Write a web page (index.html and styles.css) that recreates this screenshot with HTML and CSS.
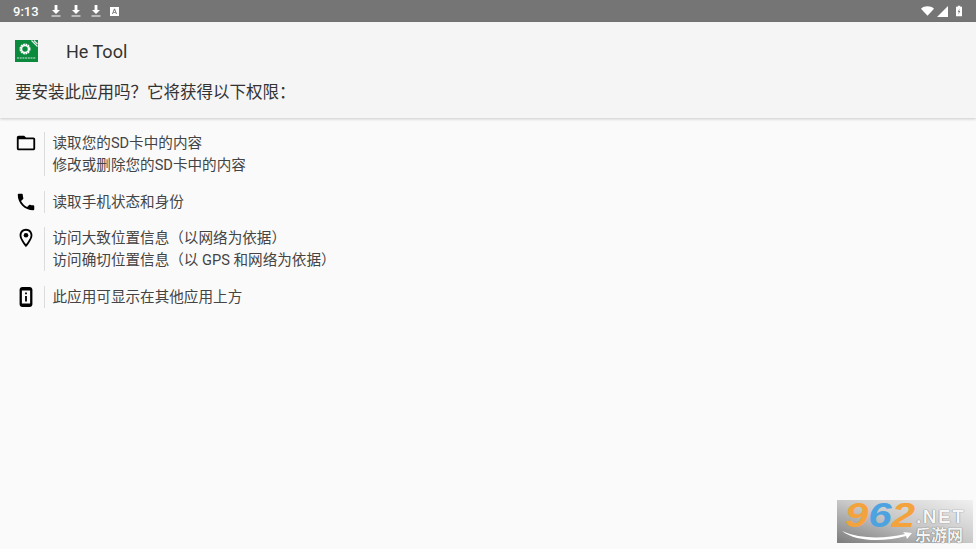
FILE: index.html
```html
<!DOCTYPE html>
<html>
    <head>
        <meta charset="utf-8">
        <link rel="stylesheet" href="styles.css">
    </head>
    <body>
        <div class="status-bar">
            <span class="clock">9:13</span>
            <div class="notify-icons">
                <svg class="dl-icon" viewBox="0 0 10 12"><path d="M3.6 0h2.8v5H9L5 9 1 5h2.6zM0.5 10.4h9v1.200h-9z" fill="#fff"/></svg>
                <svg class="dl-icon" viewBox="0 0 10 12"><path d="M3.6 0h2.8v5H9L5 9 1 5h2.6zM0.5 10.4h9v1.200h-9z" fill="#fff"/></svg>
                <svg class="dl-icon" viewBox="0 0 10 12"><path d="M3.6 0h2.8v5H9L5 9 1 5h2.6zM0.5 10.4h9v1.200h-9z" fill="#fff"/></svg>
                <svg class="a-icon" viewBox="0 0 9 9"><path fill-rule="evenodd" d="M0 0h9v9H0zM4 1.800L2 7h1l.4-1.200h2.200L6 7h1L5 1.800zM3.700 5L4.500 2.900 5.300 5z" fill="#fff"/></svg>
            </div>
            <div class="system-icons">
                <svg class="wifi" viewBox="0 0 14 10"><path d="M0 2.600C3.800-.9 10.200-.9 14 2.600L7 10z" fill="#fff"/></svg>
                <svg class="signal" viewBox="0 0 11 11"><path d="M11 0v11H0z" fill="#fff"/></svg>
                <svg class="battery" viewBox="0 0 7 12"><path fill-rule="evenodd" d="M2 0h3v1h2v11H0V1h2zM4.200 3L2 7h1.300L2.800 10 5 6H3.700z" fill="#fff"/></svg>
            </div>
        </div>

        <div class="header">
            <div class="app-row">
                <svg class="app-logo" viewBox="0 0 23 22">
                    <path d="M0 0h23v22H0z" fill="#0b8a3e"/>
                    <path d="M15 0l8 8V0z" fill="#0b8a3e"/>
                    <path d="M16.500 .5l6 6M19 .5l3.500 3.500" stroke="#e4efe8" stroke-width="1.100"/>
                    <circle cx="10" cy="9" r="4.500" fill="none" stroke="#fff" stroke-width="2" stroke-dasharray="1.700 .65"/>
                    <circle cx="10" cy="9" r="3.400" fill="none" stroke="#fff" stroke-width="1.300"/>
                    <path d="M2 18h19" stroke="#cfe8d8" stroke-width="1" stroke-dasharray="2 .7"/>
                </svg>
                <span class="app-name">He Tool</span>
            </div>
            <div class="question">要安装此应用吗？它将获得以下权限：</div>
        </div>

        <div class="perms">
            <div class="perm">
                <div class="perm-icon">
                    <svg viewBox="0 0 24 24"><path d="M10 4H4c-1.100 0-2 .9-2 2v12c0 1.100.9 2 2 2h16c1.100 0 2-.9 2-2V8c0-1.100-.9-2-2-2h-8zm10 14H4V8h16z"/></svg>
                </div>
                <div class="perm-text">
                    <div>读取您的SD卡中的内容</div>
                    <div>修改或删除您的SD卡中的内容</div>
                </div>
            </div>
            <div class="perm">
                <div class="perm-icon">
                    <svg viewBox="0 0 24 24"><path d="M6.600 10.800c1.400 2.800 3.800 5.100 6.600 6.600l2.200-2.200c.3-.3.700-.4 1-.2 1.100.4 2.300.6 3.600.6.600 0 1 .4 1 1V20c0 .6-.4 1-1 1C10.600 21 3 13.400 3 4c0-.6.400-1 1-1h3.500c.6 0 1 .4 1 1 0 1.300.2 2.500.6 3.600.1.300 0 .7-.2 1z"/></svg>
                </div>
                <div class="perm-text">
                    <div>读取手机状态和身份</div>
                </div>
            </div>
            <div class="perm">
                <div class="perm-icon">
                    <svg viewBox="0 0 24 24"><path fill-rule="evenodd" d="M12 2C8.100 2 5 5.100 5 9c0 5.200 7 13 7 13s7-7.800 7-13c0-3.900-3.100-7-7-7zM7 9c0-2.800 2.200-5 5-5s5 2.200 5 5c0 2.900-2.900 7.200-5 9.900C9.900 16.200 7 11.900 7 9z"/><circle cx="12" cy="9" r="2.500"/></svg>
                </div>
                <div class="perm-text">
                    <div>访问大致位置信息（以网络为依据）</div>
                    <div>访问确切位置信息（以 GPS 和网络为依据）</div>
                </div>
            </div>
            <div class="perm">
                <div class="perm-icon">
                    <svg viewBox="0 0 24 24"><path fill-rule="evenodd" d="M8 1h8c1.700 0 3 1.300 3 3v16c0 1.700-1.300 3-3 3H8c-1.700 0-3-1.300-3-3V4c0-1.700 1.300-3 3-3zM7.500 5v14h9V5zM11 7h2v2h-2zM11 11h2v6h-2z"/></svg>
                </div>
                <div class="perm-text">
                    <div>此应用可显示在其他应用上方</div>
                </div>
            </div>
        </div>

        <div class="watermark">
            <span class="wm-num"><span class="wm-orange">9</span><span class="wm-blue">6</span><span class="wm-orange">2</span></span>
            <span class="wm-net">.NET</span>
            <svg class="wm-swoosh" viewBox="0 0 70 12"><path d="M0 1C18 9 42 9 63 4l-2-2 9 1-5 6-1-3C42 12 14 12 0 1z" fill="#fff"/></svg>
            <span class="wm-cn">乐游网</span>
        </div>
    </body>
</html>
```

FILE: styles.css
```css
html,
body {
    height: 100%;
}

body {
    margin: 0;
    background: #fafafa;
    color: #212121;
    font-family: "Roboto", "Noto Sans CJK SC", sans-serif;
    overflow: hidden;
    display: flex;
    flex-direction: column;
    position: relative;
}

.status-bar {
    height: 22px;
    flex: none;
    background: #757575;
    color: #fff;
    display: flex;
    align-items: center;
    padding: 0 14px 0 13px;
}

.clock {
    font-size: 13px;
    font-weight: 500;
    width: 38px;
}

.notify-icons {
    display: flex;
    align-items: center;
    gap: 10px;
}

.dl-icon {
    width: 10px;
    height: 12px;
}

.a-icon {
    width: 9px;
    height: 9px;
    margin-left: -1px;
}

.system-icons {
    margin-left: auto;
    display: flex;
    align-items: center;
    gap: 3px;
}

.wifi {
    width: 13px;
    height: 10px;
}

.signal {
    width: 11px;
    height: 11px;
}

.battery {
    width: 6px;
    height: 12px;
    margin-left: 5px;
}

.header {
    height: 96px;
    flex: none;
    box-sizing: border-box;
    background: #f5f5f5;
    box-shadow: 0 1px 3px rgba(0, 0, 0, 0.2);
    padding: 18px 15px 0;
}

.app-row {
    display: flex;
    align-items: center;
    height: 22px;
}

.app-logo {
    width: 23px;
    height: 22px;
}

.app-name {
    margin-left: 28px;
    font-size: 18px;
    color: #333;
}

.question {
    margin-top: 19px;
    font-size: 16.5px;
    line-height: 24px;
    color: #333;
}

.perms {
    padding-top: 14px;
    display: flex;
    flex-direction: column;
    gap: 14.6px;
}

.perm {
    display: flex;
    padding-left: 15px;
}

.perm-icon {
    width: 22px;
    height: 22px;
    flex: none;
}

.perm-icon svg {
    display: block;
    width: 22px;
    height: 22px;
}

.perm-text {
    margin-left: 7px;
    border-left: 1px solid #dcdcdc;
    padding-left: 7.5px;
    font-size: 14.6px;
    line-height: 22px;
    color: #444;
}

/* site stamp in the corner, the pieces sit freely over a gradient */
.watermark {
    position: absolute;
    left: 837px;
    top: 500px;
    width: 136px;
    height: 43px;
    background: linear-gradient(to bottom left, #f0f0f0 0%, #c8c8c8 50%, #7c7c7c 100%);
    font-family: "Liberation Sans", "Noto Sans CJK SC", sans-serif;
    font-weight: 700;
}

.wm-num {
    position: absolute;
    left: 8px;
    top: 0;
    font-size: 35px;
    line-height: 30px;
    font-style: italic;
    transform: scaleX(1.2);
    transform-origin: left top;
}

.wm-orange {
    color: #f4a33c;
}

.wm-blue {
    color: #4da3e0;
}

.wm-net {
    position: absolute;
    left: 79px;
    top: 7px;
    font-size: 19px;
    line-height: 20px;
    letter-spacing: 1.5px;
    color: #f6f6f6;
    text-shadow: 0 0 1px #444;
}

.wm-swoosh {
    position: absolute;
    left: 5px;
    top: 30px;
    width: 70px;
    height: 12px;
}

.wm-cn {
    position: absolute;
    left: 78px;
    top: 28px;
    font-size: 16px;
    line-height: 15px;
    color: #f4f4f4;
    text-shadow: 0 0 1px #333;
}
```
